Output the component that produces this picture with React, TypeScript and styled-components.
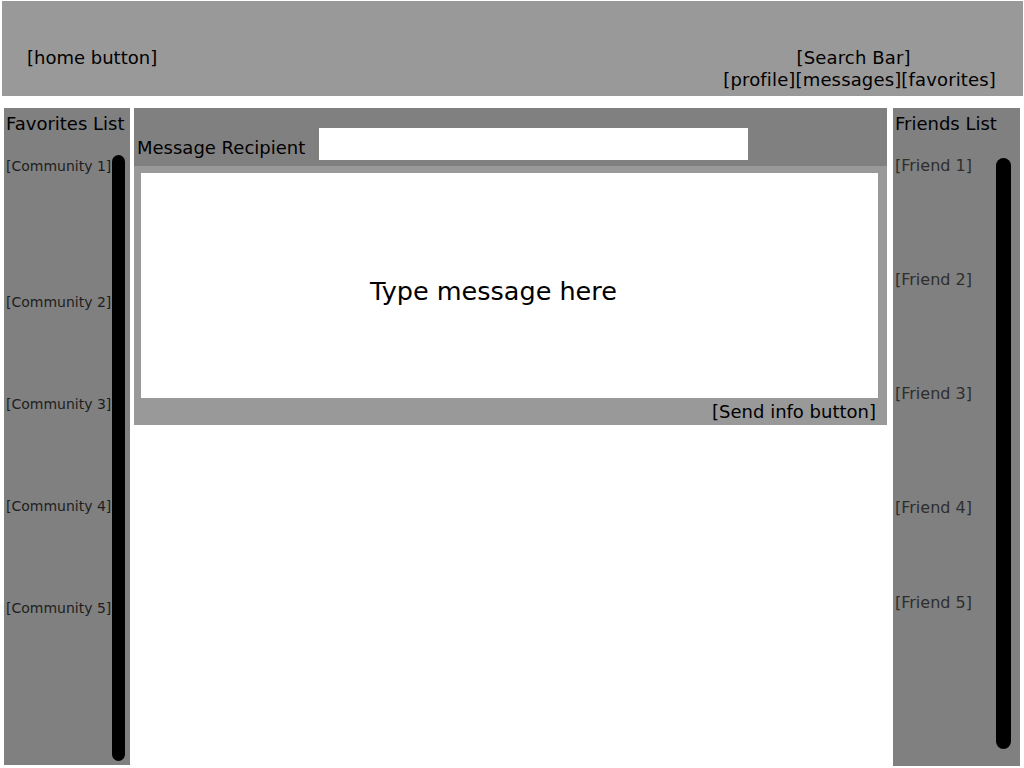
import React from "react";
import styled, { createGlobalStyle } from "styled-components";

const GlobalStyle = createGlobalStyle`
    body {
        margin: 0;
        background: #ffffff;
        font-family: "DejaVu Sans", Verdana, sans-serif;
        overflow: hidden;
    }
`

const Page = styled.div`
    width: 1024px;
    height: 768px;
`

const Header = styled.header`
    height: 95px;
    margin: 1px 1px 0 2px;
    padding: 46px 27px 0 25px;
    box-sizing: border-box;
    background-color: #999999;
    display: flex;
    justify-content: space-between;
    align-items: flex-start;
    font-size: 18px;
    line-height: 22px;
    color: #000;
`

const HeaderRight = styled.div`
    display: flex;
    flex-direction: column;
    align-items: center;
    letter-spacing: 0.15px;
`

const SearchBar = styled.span`
    padding-right: 12px;
`

const Body = styled.div`
    display: flex;
    margin: 12px 4px 0 4px;
    align-items: flex-start;
`

const Sidebar = styled.aside<{ $width: number; $height: number; $padRight: number; $padBottom: number }>`
    width: ${p => p.$width}px;
    height: ${p => p.$height}px;
    box-sizing: border-box;
    padding: 5px ${p => p.$padRight}px ${p => p.$padBottom}px 2px;
    background-color: #808080;
    display: flex;
    flex-direction: column;
`

const SideTitle = styled.h2`
    margin: 0;
    font-size: 18px;
    line-height: 22px;
    font-weight: normal;
    color: #000;
    white-space: nowrap;
`

const SideBody = styled.div`
    flex: 1;
    display: flex;
`

const ItemList = styled.ul`
    flex: 1;
    margin: 0;
    padding: 0;
    list-style: none;
`

const Item = styled.li<{ $size: number; $top: number; $color: string }>`
    margin-top: ${p => p.$top}px;
    font-size: ${p => p.$size}px;
    line-height: ${p => p.$size + 3}px;
    color: ${p => p.$color};
    white-space: nowrap;
`

const Scrollbar = styled.div<{ $width: number; $top: number }>`
    width: ${p => p.$width}px;
    margin-top: ${p => p.$top}px;
    border-radius: ${p => Math.ceil(p.$width / 2)}px;
    background-color: #000;
`

const Center = styled.main`
    width: 753px;
    margin: 0 6px 0 4px;
    display: flex;
    flex-direction: column;
`

const RecipientBar = styled.div`
    height: 58px;
    box-sizing: border-box;
    padding: 0 0 6px 3px;
    background-color: #808080;
    display: flex;
    align-items: flex-end;
`

const RecipientLabel = styled.label`
    width: 182px;
    margin-bottom: 1px;
    font-size: 18px;
    line-height: 22px;
    color: #000;
    white-space: nowrap;
`

const RecipientInput = styled.div`
    width: 429px;
    height: 32px;
    background-color: #fff;
`

const MessageArea = styled.div`
    background-color: #999999;
    padding: 7px 9px 0 7px;
`

const MessageBox = styled.div`
    height: 225px;
    box-sizing: border-box;
    padding: 10px 32px 0 0;
    background-color: #fff;
    display: flex;
    align-items: center;
    justify-content: center;
    font-size: 25.5px;
    color: #000;
`

const SendRow = styled.div`
    height: 27px;
    padding-right: 2px;
    display: flex;
    align-items: center;
    justify-content: flex-end;
    font-size: 18px;
    line-height: 22px;
    color: #000;
`

const communities = [
    { name: "[Community 1]", top: 23 },
    { name: "[Community 2]", top: 119 },
    { name: "[Community 3]", top: 85 },
    { name: "[Community 4]", top: 85 },
    { name: "[Community 5]", top: 85 },
]

const friends = [
    { name: "[Friend 1]", top: 21 },
    { name: "[Friend 2]", top: 95 },
    { name: "[Friend 3]", top: 95 },
    { name: "[Friend 4]", top: 95 },
    { name: "[Friend 5]", top: 76 },
]

const App: React.FC<{}> = () => {
    return(
        <Page>
            <GlobalStyle />
            <Header>
                <span>[home button]</span>
                <HeaderRight>
                    <SearchBar>[Search Bar]</SearchBar>
                    <span>[profile][messages][favorites]</span>
                </HeaderRight>
            </Header>
            <Body>
                <Sidebar $width={126} $height={657} $padRight={5} $padBottom={4}>
                    <SideTitle>Favorites List</SideTitle>
                    <SideBody>
                        <ItemList>
                            {communities.map(c => (
                                <Item key={c.name} $size={14} $top={c.top} $color="#1e1e1e">{c.name}</Item>
                            ))}
                        </ItemList>
                        <Scrollbar $width={13} $top={20} />
                    </SideBody>
                </Sidebar>
                <Center>
                    <RecipientBar>
                        <RecipientLabel>Message Recipient</RecipientLabel>
                        <RecipientInput />
                    </RecipientBar>
                    <MessageArea>
                        <MessageBox>Type message here</MessageBox>
                        <SendRow>[Send info button]</SendRow>
                    </MessageArea>
                </Center>
                <Sidebar $width={127} $height={658} $padRight={9} $padBottom={17}>
                    <SideTitle>Friends List</SideTitle>
                    <SideBody>
                        <ItemList>
                            {friends.map(f => (
                                <Item key={f.name} $size={16} $top={f.top} $color="#2e2e2e">{f.name}</Item>
                            ))}
                        </ItemList>
                        <Scrollbar $width={15} $top={23} />
                    </SideBody>
                </Sidebar>
            </Body>
        </Page>
    )
}

export default App;
